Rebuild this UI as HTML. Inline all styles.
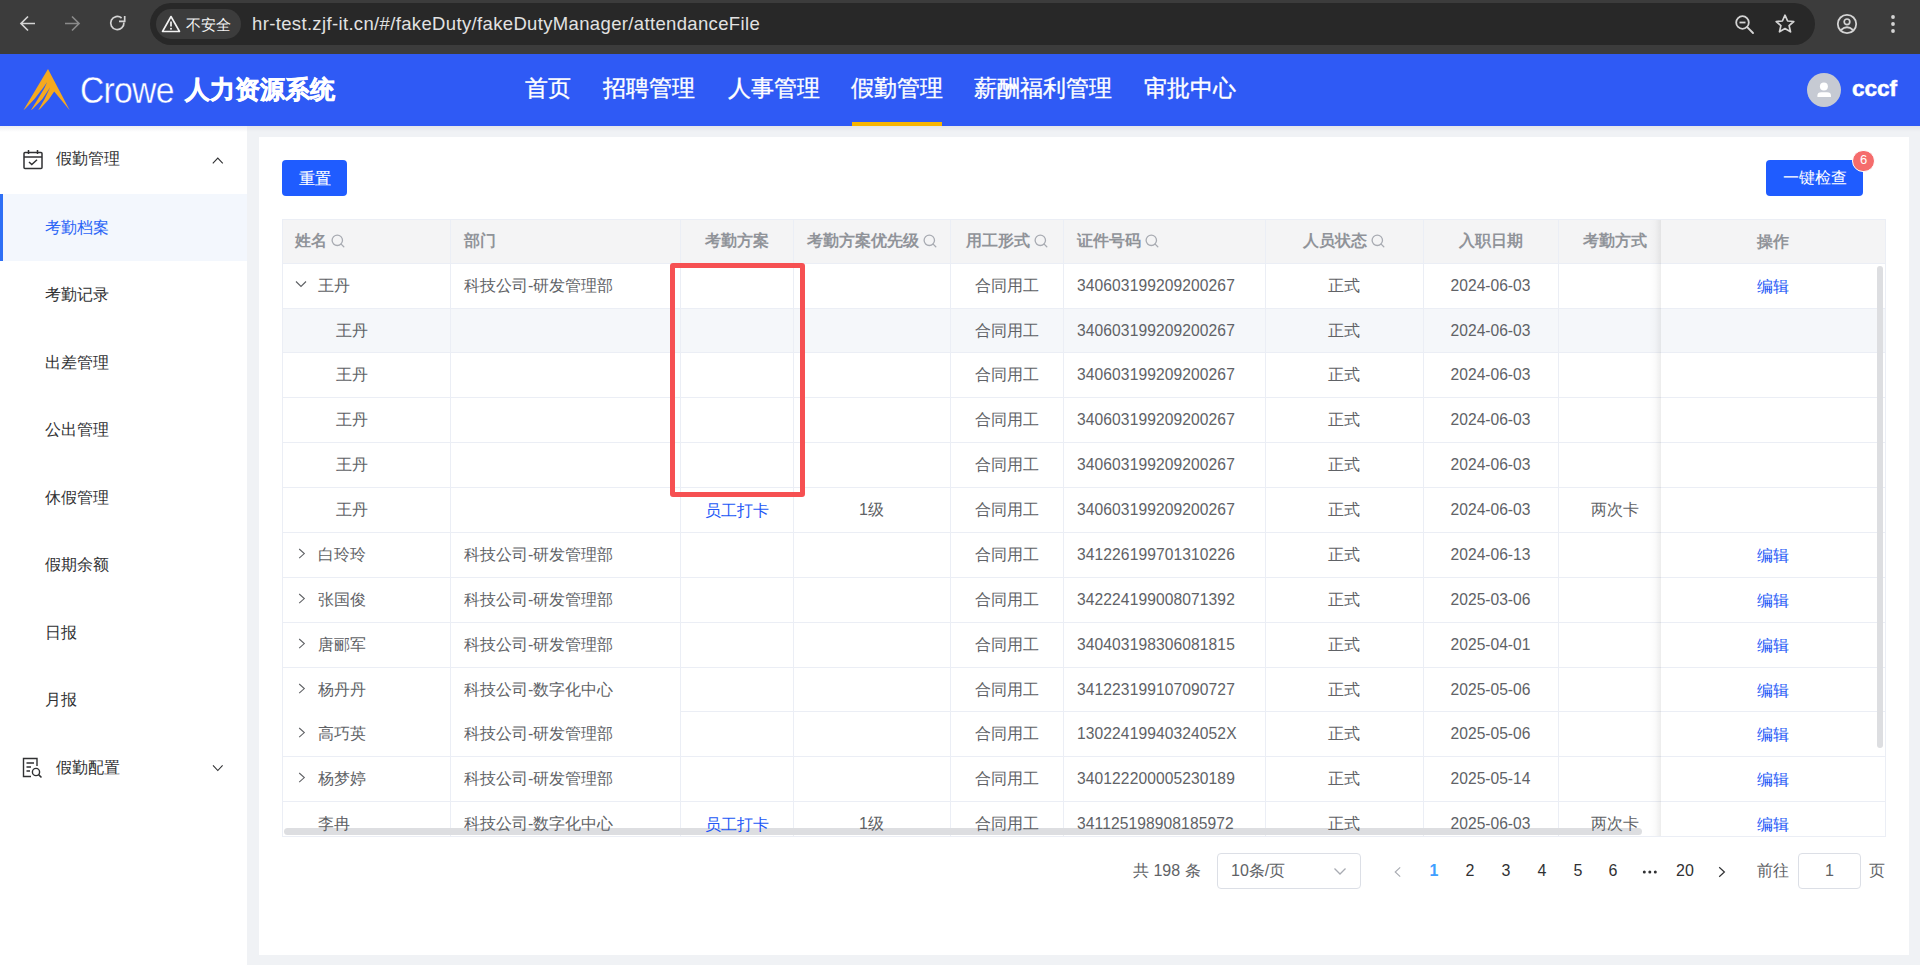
<!DOCTYPE html>
<html><head><meta charset="utf-8"><style>
*{box-sizing:border-box;margin:0;padding:0}
html,body{width:1920px;height:965px;overflow:hidden;background:#f0f2f5;font-family:"Liberation Sans",sans-serif;position:relative}
.abs{position:absolute}
svg{display:block}
.t{position:absolute;white-space:nowrap;z-index:1}
</style></head><body>

<div class="abs" style="left:0;top:0;width:1920px;height:54px;background:#3c3c3c"></div>
<svg class="abs" style="left:18px;top:14px" width="20" height="20" viewBox="0 0 20 20"><path d="M17 9.5 H3.5 M10 2.5 L3 9.5 L10 16.5" fill="none" stroke="#d4d4d4" stroke-width="1.7" stroke-linejoin="miter"/></svg>
<svg class="abs" style="left:63px;top:14px" width="20" height="20" viewBox="0 0 20 20"><path d="M2 9.5 H15.5 M9 2.5 L16 9.5 L9 16.5" fill="none" stroke="#8a8a8a" stroke-width="1.7" stroke-linejoin="miter"/></svg>
<svg class="abs" style="left:107px;top:13px" width="20" height="20" viewBox="0 0 20 20"><path d="M16.9 9.5 A6.6 6.6 0 1 1 14.6 5" fill="none" stroke="#d4d4d4" stroke-width="1.7"/><path d="M12 8.3 H17.7 V3" fill="none" stroke="#d4d4d4" stroke-width="1.7"/></svg>
<div class="abs" style="left:150px;top:3px;width:1665px;height:42px;border-radius:21px;background:#282828"></div>
<div class="abs" style="left:156px;top:9px;width:85px;height:30px;border-radius:15px;background:#3c3c3c"></div>
<svg class="abs" style="left:161px;top:15px" width="20" height="18" viewBox="0 0 20 18"><path d="M10 1.5 L18.5 16.5 H1.5 Z" fill="none" stroke="#f2f2f2" stroke-width="1.6" stroke-linejoin="round"/><path d="M10 6.5 V11.5" stroke="#f2f2f2" stroke-width="1.7"/><circle cx="10" cy="13.8" r="1" fill="#f2f2f2"/></svg>
<div class="t" style="left:186px;top:13.5px;font-size:15px;line-height:22px;color:#f2f2f2">不安全</div>
<div class="t" style="left:252px;top:11.5px;font-size:18.5px;letter-spacing:0.35px;line-height:24px;color:#e2e2e2">hr-test.zjf-it.cn/#/fakeDuty/fakeDutyManager/attendanceFile</div>
<svg class="abs" style="left:1734px;top:14px" width="22" height="22" viewBox="0 0 22 22"><circle cx="8.5" cy="8.5" r="6.3" fill="none" stroke="#d4d4d4" stroke-width="1.8"/><path d="M5.5 8.5 H11.5" stroke="#d4d4d4" stroke-width="1.8"/><path d="M13.2 13.2 L19 19" stroke="#d4d4d4" stroke-width="1.9" stroke-linecap="round"/></svg>
<svg class="abs" style="left:1774px;top:13px" width="22" height="22" viewBox="0 0 22 22"><path d="M11 2.2 L13.6 8 L19.8 8.5 L15.1 12.6 L16.5 18.8 L11 15.5 L5.5 18.8 L6.9 12.6 L2.2 8.5 L8.4 8 Z" fill="none" stroke="#d4d4d4" stroke-width="1.7" stroke-linejoin="round"/></svg>
<svg class="abs" style="left:1836px;top:13px" width="22" height="22" viewBox="0 0 22 22"><circle cx="11" cy="11" r="9.2" fill="none" stroke="#d4d4d4" stroke-width="1.8"/><circle cx="11" cy="8.8" r="2.8" fill="none" stroke="#d4d4d4" stroke-width="1.7"/><path d="M5 17 Q11 11.5 17 17" fill="none" stroke="#d4d4d4" stroke-width="1.7"/></svg>
<svg class="abs" style="left:1888px;top:13px" width="10" height="22" viewBox="0 0 10 22"><circle cx="5" cy="4" r="1.9" fill="#d4d4d4"/><circle cx="5" cy="11" r="1.9" fill="#d4d4d4"/><circle cx="5" cy="18" r="1.9" fill="#d4d4d4"/></svg>
<div class="abs" style="left:0;top:54px;width:1920px;height:72px;background:#2f5af5"></div>
<div class="abs" style="left:0;top:126px;width:1920px;height:6px;background:linear-gradient(#e4e6ea,#f0f2f5)"></div>
<svg class="abs" style="left:20px;top:66px" width="54" height="48" viewBox="0 0 54 48"><path d="M28 3.1 L49.7 44.3 L34.2 25.4 L29.1 33 L20.5 42.5 L18.2 44.3 L24.6 33 L30.2 21.3 L22.4 33 L13 42.8 L10.9 44.2 L17.9 33 L24.6 21.8 L27.2 16.1 L23.2 21.8 L14.5 33 L5.5 42.5 L3.4 44.2 Z" fill="#f5a91f"/></svg>
<div class="t" style="left:79.5px;top:68.5px;font-size:37px;line-height:44px;color:#fff;letter-spacing:-0.8px;-webkit-text-stroke:0.4px #2f5af5;transform-origin:0 0;transform:scaleX(0.91)">Crowe</div>
<div class="t" style="left:185px;top:72px;font-size:25px;line-height:34px;color:#fff;font-weight:bold;-webkit-text-stroke:0.6px #fff">人力资源系统</div>
<div class="t" style="left:525px;top:72px;font-size:23px;line-height:32px;color:#fff;-webkit-text-stroke:0.35px #fff">首页</div>
<div class="t" style="left:603px;top:72px;font-size:23px;line-height:32px;color:#fff;-webkit-text-stroke:0.35px #fff">招聘管理</div>
<div class="t" style="left:728px;top:72px;font-size:23px;line-height:32px;color:#fff;-webkit-text-stroke:0.35px #fff">人事管理</div>
<div class="t" style="left:851px;top:72px;font-size:23px;line-height:32px;color:#fff;-webkit-text-stroke:0.35px #fff">假勤管理</div>
<div class="t" style="left:974px;top:72px;font-size:23px;line-height:32px;color:#fff;-webkit-text-stroke:0.35px #fff">薪酬福利管理</div>
<div class="t" style="left:1144px;top:72px;font-size:23px;line-height:32px;color:#fff;-webkit-text-stroke:0.35px #fff">审批中心</div>
<div class="abs" style="left:852px;top:122px;width:90px;height:4px;background:#f7b500"></div>
<div class="abs" style="left:1807px;top:73px;width:34px;height:34px;border-radius:17px;background:#c6cad3"></div>
<svg class="abs" style="left:1814px;top:80px" width="20" height="20" viewBox="0 0 20 20"><circle cx="9.9" cy="6.4" r="4" fill="#fff"/><path d="M3.4 16.9 V15.6 Q3.4 12.2 7.4 12.2 H13 Q17 12.2 17 15.6 V16.9 Z" fill="#fff"/></svg>
<div class="t" style="left:1852px;top:73px;font-size:22.5px;line-height:32px;color:#fff;font-weight:bold;-webkit-text-stroke:0.5px #fff">cccf</div>
<div class="abs" style="left:0;top:126px;width:247px;height:839px;background:#fff"></div>
<div class="abs" style="left:0;top:126px;width:247px;height:6px;background:linear-gradient(#eceef1,#fff)"></div>
<svg class="abs" style="left:23px;top:149px" width="20" height="21" viewBox="0 0 20 21"><rect x="1" y="3.5" width="18" height="16" rx="1" fill="none" stroke="#303133" stroke-width="1.5"/><path d="M1 8 H19" stroke="#303133" stroke-width="1.5"/><path d="M5.5 1 V5 M14.5 1 V5" stroke="#303133" stroke-width="1.5"/><path d="M6 13 L8.8 15.6 L14 10.8" fill="none" stroke="#303133" stroke-width="1.5"/></svg>
<div class="t" style="left:56px;top:148px;font-size:16px;line-height:22px;color:#303133">假勤管理</div>
<svg class="abs" style="left:211px;top:156px" width="13" height="9" viewBox="0 0 13 9"><path d="M1.8 7.3 L6.8 2 L11.8 7.3" fill="none" stroke="#303133" stroke-width="1.1"/></svg>
<div class="abs" style="left:0;top:194px;width:247px;height:67px;background:#f3f7fd"></div>
<div class="abs" style="left:0;top:194px;width:3px;height:67px;background:#2e6ff5"></div>
<div class="t" style="left:45px;top:216.5px;font-size:16px;line-height:22px;color:#2a64f6">考勤档案</div>
<div class="t" style="left:45px;top:284.0px;font-size:16px;line-height:22px;color:#303133">考勤记录</div>
<div class="t" style="left:45px;top:351.5px;font-size:16px;line-height:22px;color:#303133">出差管理</div>
<div class="t" style="left:45px;top:419.0px;font-size:16px;line-height:22px;color:#303133">公出管理</div>
<div class="t" style="left:45px;top:486.5px;font-size:16px;line-height:22px;color:#303133">休假管理</div>
<div class="t" style="left:45px;top:554.0px;font-size:16px;line-height:22px;color:#303133">假期余额</div>
<div class="t" style="left:45px;top:621.5px;font-size:16px;line-height:22px;color:#303133">日报</div>
<div class="t" style="left:45px;top:689.0px;font-size:16px;line-height:22px;color:#303133">月报</div>
<svg class="abs" style="left:22px;top:757px" width="22" height="22" viewBox="0 0 22 22"><path d="M15 9 V1.5 H1.5 V19.5 H9" fill="none" stroke="#303133" stroke-width="1.4"/><path d="M4.5 6 H12 M4.5 10 H9 M4.5 14 H8" stroke="#303133" stroke-width="1.4"/><circle cx="14" cy="15" r="3.6" fill="none" stroke="#303133" stroke-width="1.4"/><path d="M16.6 17.6 L19.5 20.5" stroke="#303133" stroke-width="1.5"/></svg>
<div class="t" style="left:56px;top:757px;font-size:16px;line-height:22px;color:#303133">假勤配置</div>
<svg class="abs" style="left:211px;top:764px" width="13" height="9" viewBox="0 0 13 9"><path d="M2 1.3 L6.8 6.5 L11.6 1.3" fill="none" stroke="#303133" stroke-width="1.1"/></svg>
<div class="abs" style="left:259px;top:137px;width:1650px;height:818px;background:#fff"></div>
<div class="abs" style="left:282px;top:160px;width:65px;height:36px;border-radius:4px;background:#1f5cff"></div>
<div class="t" style="left:282px;top:161px;width:65px;text-align:center;font-size:15.5px;line-height:36px;color:#fff;-webkit-text-stroke:0.15px #fff">重置</div>
<div class="abs" style="left:1766px;top:160px;width:97px;height:36px;border-radius:4px;background:#1f5cff"></div>
<div class="t" style="left:1766px;top:160px;width:97px;text-align:center;font-size:15.5px;line-height:36px;color:#fff">一键检查</div>
<div class="abs" style="left:1852px;top:150px;width:23px;height:22px;border:1px solid #fff;border-radius:11px;background:#f56c6c;color:#fff;font-size:13px;line-height:17px;text-align:center">6</div>
<div class="abs" style="left:282px;top:219px;width:1604px;height:618.3px;border:1px solid #ebeef5;background:#fff;overflow:hidden">
<div class="abs" style="left:0;top:0;width:1604px;height:43px;background:#f4f4f5"></div>
<div class="abs" style="left:0;top:43px;width:1604px;height:1px;background:#ebeef5"></div>
<div class="abs" style="left:0;top:89px;width:1604px;height:43px;background:#f5f7fa"></div>
<div class="abs" style="left:0;top:88px;width:1604px;height:1px;background:#ebeef5"></div>
<div class="abs" style="left:0;top:132px;width:1604px;height:1px;background:#ebeef5"></div>
<div class="abs" style="left:0;top:177px;width:1604px;height:1px;background:#ebeef5"></div>
<div class="abs" style="left:0;top:222px;width:1604px;height:1px;background:#ebeef5"></div>
<div class="abs" style="left:0;top:267px;width:1604px;height:1px;background:#ebeef5"></div>
<div class="abs" style="left:0;top:312px;width:1604px;height:1px;background:#ebeef5"></div>
<div class="abs" style="left:0;top:357px;width:1604px;height:1px;background:#ebeef5"></div>
<div class="abs" style="left:0;top:402px;width:1604px;height:1px;background:#ebeef5"></div>
<div class="abs" style="left:0;top:447px;width:1604px;height:1px;background:#ebeef5"></div>
<div class="abs" style="left:397px;top:491px;width:1604px;height:1px;background:#ebeef5"></div>
<div class="abs" style="left:0;top:536px;width:1604px;height:1px;background:#ebeef5"></div>
<div class="abs" style="left:0;top:581px;width:1604px;height:1px;background:#ebeef5"></div>
<div class="abs" style="left:0;top:626px;width:1604px;height:1px;background:#ebeef5"></div>
<div class="abs" style="left:167px;top:0;width:1px;height:700px;background:#ebeef5"></div>
<div class="abs" style="left:397px;top:0;width:1px;height:700px;background:#ebeef5"></div>
<div class="abs" style="left:510px;top:0;width:1px;height:700px;background:#ebeef5"></div>
<div class="abs" style="left:667px;top:0;width:1px;height:700px;background:#ebeef5"></div>
<div class="abs" style="left:780px;top:0;width:1px;height:700px;background:#ebeef5"></div>
<div class="abs" style="left:982px;top:0;width:1px;height:700px;background:#ebeef5"></div>
<div class="abs" style="left:1140px;top:0;width:1px;height:700px;background:#ebeef5"></div>
<div class="abs" style="left:1275px;top:0;width:1px;height:700px;background:#ebeef5"></div>
<div class="t hd" style="left:12px;top:-1px;line-height:44px">姓名<svg class="si" width="14" height="14" viewBox="0 0 14 14"><circle cx="6.3" cy="6.3" r="5.2" fill="none" stroke="#a8abb2" stroke-width="1.3"/><path d="M10.1 10.1 L12.8 12.8" stroke="#a8abb2" stroke-width="1.3" stroke-linecap="round"/></svg></div>
<div class="t hd" style="left:181px;top:-1px;line-height:44px">部门</div>
<div class="t hd" style="left:397px;width:113px;text-align:center;top:-1px;line-height:44px">考勤方案</div>
<div class="t hd" style="left:510px;width:157px;text-align:center;top:-1px;line-height:44px">考勤方案优先级<svg class="si" width="14" height="14" viewBox="0 0 14 14"><circle cx="6.3" cy="6.3" r="5.2" fill="none" stroke="#a8abb2" stroke-width="1.3"/><path d="M10.1 10.1 L12.8 12.8" stroke="#a8abb2" stroke-width="1.3" stroke-linecap="round"/></svg></div>
<div class="t hd" style="left:667px;width:113px;text-align:center;top:-1px;line-height:44px">用工形式<svg class="si" width="14" height="14" viewBox="0 0 14 14"><circle cx="6.3" cy="6.3" r="5.2" fill="none" stroke="#a8abb2" stroke-width="1.3"/><path d="M10.1 10.1 L12.8 12.8" stroke="#a8abb2" stroke-width="1.3" stroke-linecap="round"/></svg></div>
<div class="t hd" style="left:794px;top:-1px;line-height:44px">证件号码<svg class="si" width="14" height="14" viewBox="0 0 14 14"><circle cx="6.3" cy="6.3" r="5.2" fill="none" stroke="#a8abb2" stroke-width="1.3"/><path d="M10.1 10.1 L12.8 12.8" stroke="#a8abb2" stroke-width="1.3" stroke-linecap="round"/></svg></div>
<div class="t hd" style="left:982px;width:158px;text-align:center;top:-1px;line-height:44px">人员状态<svg class="si" width="14" height="14" viewBox="0 0 14 14"><circle cx="6.3" cy="6.3" r="5.2" fill="none" stroke="#a8abb2" stroke-width="1.3"/><path d="M10.1 10.1 L12.8 12.8" stroke="#a8abb2" stroke-width="1.3" stroke-linecap="round"/></svg></div>
<div class="t hd" style="left:1140px;width:135px;text-align:center;top:-1px;line-height:44px">入职日期</div>
<div class="t hd" style="left:1275px;width:113px;text-align:center;top:-1px;line-height:44px">考勤方式</div>
<div class="abs" style="left:12px;top:59.5px"><svg width="12" height="8" viewBox="0 0 12 8"><path d="M1 1.5 L6 6.5 L11 1.5" fill="none" stroke="#606266" stroke-width="1.2"/></svg></div>
<div class="t td" style="left:35px;top:44px;line-height:44px">王丹</div>
<div class="t td" style="left:181px;top:44px;line-height:44px">科技公司-研发管理部</div>
<div class="t td" style="left:667px;width:113px;text-align:center;top:44px;line-height:44px">合同用工</div>
<div class="t td num id" style="left:794px;top:44px;line-height:44px">340603199209200267</div>
<div class="t td" style="left:982px;width:158px;text-align:center;top:44px;line-height:44px">正式</div>
<div class="t td" style="left:1140px;width:135px;text-align:center;top:44px;line-height:44px"><span class="num">2024-06-03</span></div>
<div class="t td" style="left:53px;top:89px;line-height:43px">王丹</div>
<div class="t td" style="left:667px;width:113px;text-align:center;top:89px;line-height:43px">合同用工</div>
<div class="t td num id" style="left:794px;top:89px;line-height:43px">340603199209200267</div>
<div class="t td" style="left:982px;width:158px;text-align:center;top:89px;line-height:43px">正式</div>
<div class="t td" style="left:1140px;width:135px;text-align:center;top:89px;line-height:43px"><span class="num">2024-06-03</span></div>
<div class="t td" style="left:53px;top:133px;line-height:44px">王丹</div>
<div class="t td" style="left:667px;width:113px;text-align:center;top:133px;line-height:44px">合同用工</div>
<div class="t td num id" style="left:794px;top:133px;line-height:44px">340603199209200267</div>
<div class="t td" style="left:982px;width:158px;text-align:center;top:133px;line-height:44px">正式</div>
<div class="t td" style="left:1140px;width:135px;text-align:center;top:133px;line-height:44px"><span class="num">2024-06-03</span></div>
<div class="t td" style="left:53px;top:178px;line-height:44px">王丹</div>
<div class="t td" style="left:667px;width:113px;text-align:center;top:178px;line-height:44px">合同用工</div>
<div class="t td num id" style="left:794px;top:178px;line-height:44px">340603199209200267</div>
<div class="t td" style="left:982px;width:158px;text-align:center;top:178px;line-height:44px">正式</div>
<div class="t td" style="left:1140px;width:135px;text-align:center;top:178px;line-height:44px"><span class="num">2024-06-03</span></div>
<div class="t td" style="left:53px;top:223px;line-height:44px">王丹</div>
<div class="t td" style="left:667px;width:113px;text-align:center;top:223px;line-height:44px">合同用工</div>
<div class="t td num id" style="left:794px;top:223px;line-height:44px">340603199209200267</div>
<div class="t td" style="left:982px;width:158px;text-align:center;top:223px;line-height:44px">正式</div>
<div class="t td" style="left:1140px;width:135px;text-align:center;top:223px;line-height:44px"><span class="num">2024-06-03</span></div>
<div class="t td" style="left:53px;top:268px;line-height:44px">王丹</div>
<div class="t td lk" style="left:397px;width:113px;text-align:center;top:268px;line-height:44px">员工打卡</div>
<div class="t td" style="left:510px;width:157px;text-align:center;top:268px;line-height:44px">1级</div>
<div class="t td" style="left:667px;width:113px;text-align:center;top:268px;line-height:44px">合同用工</div>
<div class="t td num id" style="left:794px;top:268px;line-height:44px">340603199209200267</div>
<div class="t td" style="left:982px;width:158px;text-align:center;top:268px;line-height:44px">正式</div>
<div class="t td" style="left:1140px;width:135px;text-align:center;top:268px;line-height:44px"><span class="num">2024-06-03</span></div>
<div class="t td" style="left:1275px;width:113px;text-align:center;top:268px;line-height:44px">两次卡</div>
<div class="abs" style="left:14px;top:326.5px"><svg width="10" height="13" viewBox="0 0 10 13"><path d="M2.2 2 L7.3 6.6 L2.2 11.2" fill="none" stroke="#606266" stroke-width="1.1"/></svg></div>
<div class="t td" style="left:35px;top:313px;line-height:44px">白玲玲</div>
<div class="t td" style="left:181px;top:313px;line-height:44px">科技公司-研发管理部</div>
<div class="t td" style="left:667px;width:113px;text-align:center;top:313px;line-height:44px">合同用工</div>
<div class="t td num id" style="left:794px;top:313px;line-height:44px">341226199701310226</div>
<div class="t td" style="left:982px;width:158px;text-align:center;top:313px;line-height:44px">正式</div>
<div class="t td" style="left:1140px;width:135px;text-align:center;top:313px;line-height:44px"><span class="num">2024-06-13</span></div>
<div class="abs" style="left:14px;top:371.5px"><svg width="10" height="13" viewBox="0 0 10 13"><path d="M2.2 2 L7.3 6.6 L2.2 11.2" fill="none" stroke="#606266" stroke-width="1.1"/></svg></div>
<div class="t td" style="left:35px;top:358px;line-height:44px">张国俊</div>
<div class="t td" style="left:181px;top:358px;line-height:44px">科技公司-研发管理部</div>
<div class="t td" style="left:667px;width:113px;text-align:center;top:358px;line-height:44px">合同用工</div>
<div class="t td num id" style="left:794px;top:358px;line-height:44px">342224199008071392</div>
<div class="t td" style="left:982px;width:158px;text-align:center;top:358px;line-height:44px">正式</div>
<div class="t td" style="left:1140px;width:135px;text-align:center;top:358px;line-height:44px"><span class="num">2025-03-06</span></div>
<div class="abs" style="left:14px;top:416.5px"><svg width="10" height="13" viewBox="0 0 10 13"><path d="M2.2 2 L7.3 6.6 L2.2 11.2" fill="none" stroke="#606266" stroke-width="1.1"/></svg></div>
<div class="t td" style="left:35px;top:403px;line-height:44px">唐郦军</div>
<div class="t td" style="left:181px;top:403px;line-height:44px">科技公司-研发管理部</div>
<div class="t td" style="left:667px;width:113px;text-align:center;top:403px;line-height:44px">合同用工</div>
<div class="t td num id" style="left:794px;top:403px;line-height:44px">340403198306081815</div>
<div class="t td" style="left:982px;width:158px;text-align:center;top:403px;line-height:44px">正式</div>
<div class="t td" style="left:1140px;width:135px;text-align:center;top:403px;line-height:44px"><span class="num">2025-04-01</span></div>
<div class="abs" style="left:14px;top:461.5px"><svg width="10" height="13" viewBox="0 0 10 13"><path d="M2.2 2 L7.3 6.6 L2.2 11.2" fill="none" stroke="#606266" stroke-width="1.1"/></svg></div>
<div class="t td" style="left:35px;top:448px;line-height:43px">杨丹丹</div>
<div class="t td" style="left:181px;top:448px;line-height:43px">科技公司-数字化中心</div>
<div class="t td" style="left:667px;width:113px;text-align:center;top:448px;line-height:43px">合同用工</div>
<div class="t td num id" style="left:794px;top:448px;line-height:43px">341223199107090727</div>
<div class="t td" style="left:982px;width:158px;text-align:center;top:448px;line-height:43px">正式</div>
<div class="t td" style="left:1140px;width:135px;text-align:center;top:448px;line-height:43px"><span class="num">2025-05-06</span></div>
<div class="abs" style="left:14px;top:505.5px"><svg width="10" height="13" viewBox="0 0 10 13"><path d="M2.2 2 L7.3 6.6 L2.2 11.2" fill="none" stroke="#606266" stroke-width="1.1"/></svg></div>
<div class="t td" style="left:35px;top:492px;line-height:44px">高巧英</div>
<div class="t td" style="left:181px;top:492px;line-height:44px">科技公司-研发管理部</div>
<div class="t td" style="left:667px;width:113px;text-align:center;top:492px;line-height:44px">合同用工</div>
<div class="t td num id" style="left:794px;top:492px;line-height:44px">13022419940324052X</div>
<div class="t td" style="left:982px;width:158px;text-align:center;top:492px;line-height:44px">正式</div>
<div class="t td" style="left:1140px;width:135px;text-align:center;top:492px;line-height:44px"><span class="num">2025-05-06</span></div>
<div class="abs" style="left:14px;top:550.5px"><svg width="10" height="13" viewBox="0 0 10 13"><path d="M2.2 2 L7.3 6.6 L2.2 11.2" fill="none" stroke="#606266" stroke-width="1.1"/></svg></div>
<div class="t td" style="left:35px;top:537px;line-height:44px">杨梦婷</div>
<div class="t td" style="left:181px;top:537px;line-height:44px">科技公司-研发管理部</div>
<div class="t td" style="left:667px;width:113px;text-align:center;top:537px;line-height:44px">合同用工</div>
<div class="t td num id" style="left:794px;top:537px;line-height:44px">340122200005230189</div>
<div class="t td" style="left:982px;width:158px;text-align:center;top:537px;line-height:44px">正式</div>
<div class="t td" style="left:1140px;width:135px;text-align:center;top:537px;line-height:44px"><span class="num">2025-05-14</span></div>
<div class="t td" style="left:35px;top:582px;line-height:44px">李冉</div>
<div class="t td" style="left:181px;top:582px;line-height:44px">科技公司-数字化中心</div>
<div class="t td lk" style="left:397px;width:113px;text-align:center;top:582px;line-height:44px">员工打卡</div>
<div class="t td" style="left:510px;width:157px;text-align:center;top:582px;line-height:44px">1级</div>
<div class="t td" style="left:667px;width:113px;text-align:center;top:582px;line-height:44px">合同用工</div>
<div class="t td num id" style="left:794px;top:582px;line-height:44px">341125198908185972</div>
<div class="t td" style="left:982px;width:158px;text-align:center;top:582px;line-height:44px">正式</div>
<div class="t td" style="left:1140px;width:135px;text-align:center;top:582px;line-height:44px"><span class="num">2025-06-03</span></div>
<div class="t td" style="left:1275px;width:113px;text-align:center;top:582px;line-height:44px">两次卡</div>
<div class="abs" style="left:1px;top:608px;width:1358px;height:7px;border-radius:4px;background:#dddee1;z-index:0"></div>
<div class="abs" style="z-index:3;left:1366px;top:0;width:12px;height:620px;background:linear-gradient(to right,rgba(0,0,0,0),rgba(0,0,0,0.015) 50%,rgba(0,0,0,0.07))"></div>
<div class="abs" style="z-index:3;left:1378px;top:0;width:225px;height:620px;background:#fff">
<div class="abs" style="left:0;top:0;width:300px;height:43px;background:#f4f4f5"></div>
<div class="abs" style="left:0;top:43px;width:300px;height:1px;background:#ebeef5"></div>
<div class="t hd" style="left:0;width:224px;text-align:center;top:0;line-height:44px">操作</div>
<div class="abs" style="left:0;top:88px;width:300px;height:1px;background:#ebeef5"></div>
<div class="t td lk" style="left:0;width:224px;text-align:center;top:44px;line-height:44px">编辑</div>
<div class="abs" style="left:0;top:89px;width:300px;height:43px;background:#f5f7fa"></div>
<div class="abs" style="left:0;top:132px;width:300px;height:1px;background:#ebeef5"></div>
<div class="abs" style="left:0;top:177px;width:300px;height:1px;background:#ebeef5"></div>
<div class="abs" style="left:0;top:222px;width:300px;height:1px;background:#ebeef5"></div>
<div class="abs" style="left:0;top:267px;width:300px;height:1px;background:#ebeef5"></div>
<div class="abs" style="left:0;top:312px;width:300px;height:1px;background:#ebeef5"></div>
<div class="abs" style="left:0;top:357px;width:300px;height:1px;background:#ebeef5"></div>
<div class="t td lk" style="left:0;width:224px;text-align:center;top:313px;line-height:44px">编辑</div>
<div class="abs" style="left:0;top:402px;width:300px;height:1px;background:#ebeef5"></div>
<div class="t td lk" style="left:0;width:224px;text-align:center;top:358px;line-height:44px">编辑</div>
<div class="abs" style="left:0;top:447px;width:300px;height:1px;background:#ebeef5"></div>
<div class="t td lk" style="left:0;width:224px;text-align:center;top:403px;line-height:44px">编辑</div>
<div class="abs" style="left:0;top:491px;width:300px;height:1px;background:#ebeef5"></div>
<div class="t td lk" style="left:0;width:224px;text-align:center;top:448px;line-height:43px">编辑</div>
<div class="abs" style="left:0;top:536px;width:300px;height:1px;background:#ebeef5"></div>
<div class="t td lk" style="left:0;width:224px;text-align:center;top:492px;line-height:44px">编辑</div>
<div class="abs" style="left:0;top:581px;width:300px;height:1px;background:#ebeef5"></div>
<div class="t td lk" style="left:0;width:224px;text-align:center;top:537px;line-height:44px">编辑</div>
<div class="abs" style="left:0;top:626px;width:300px;height:1px;background:#ebeef5"></div>
<div class="t td lk" style="left:0;width:224px;text-align:center;top:582px;line-height:44px">编辑</div>
<div class="abs" style="left:216px;top:46px;width:6px;height:482px;border-radius:3px;background:#dddee1"></div>
</div>
</div>
<div class="t" style="left:1133px;top:860px;font-size:16px;line-height:22px;color:#606266">共 198 条</div>
<div class="abs" style="left:1217px;top:853px;width:144px;height:36px;border:1px solid #dcdfe6;border-radius:4px;background:#fff"></div>
<div class="t" style="left:1231px;top:860px;font-size:16px;line-height:22px;color:#606266">10条/页</div>
<svg class="abs" style="left:1333px;top:867px" width="14" height="9" viewBox="0 0 14 9"><path d="M1.5 1.5 L7 7 L12.5 1.5" fill="none" stroke="#a8abb2" stroke-width="1.3"/></svg>
<svg class="abs" style="left:1392px;top:865px" width="10" height="14" viewBox="0 0 10 14"><path d="M8.2 2.3 L3.2 7 L8.2 11.7" fill="none" stroke="#a8abb2" stroke-width="1.1"/></svg>
<div class="t" style="left:1414px;width:40px;text-align:center;top:860px;font-size:16px;line-height:22px;color:#409eff;font-weight:600">1</div>
<div class="t" style="left:1450px;width:40px;text-align:center;top:860px;font-size:16px;line-height:22px;color:#303133;font-weight:400">2</div>
<div class="t" style="left:1486px;width:40px;text-align:center;top:860px;font-size:16px;line-height:22px;color:#303133;font-weight:400">3</div>
<div class="t" style="left:1522px;width:40px;text-align:center;top:860px;font-size:16px;line-height:22px;color:#303133;font-weight:400">4</div>
<div class="t" style="left:1558px;width:40px;text-align:center;top:860px;font-size:16px;line-height:22px;color:#303133;font-weight:400">5</div>
<div class="t" style="left:1593px;width:40px;text-align:center;top:860px;font-size:16px;line-height:22px;color:#303133;font-weight:400">6</div>
<div class="t" style="left:1665px;width:40px;text-align:center;top:860px;font-size:16px;line-height:22px;color:#303133;font-weight:400">20</div>
<svg class="abs" style="left:1642px;top:869px" width="16" height="6" viewBox="0 0 16 6"><circle cx="2.3" cy="3" r="1.5" fill="#303133"/><circle cx="7.8" cy="3" r="1.5" fill="#303133"/><circle cx="13.3" cy="3" r="1.5" fill="#303133"/></svg>
<svg class="abs" style="left:1717px;top:865px" width="10" height="14" viewBox="0 0 10 14"><path d="M2.2 2.3 L7.4 7 L2.2 11.7" fill="none" stroke="#303133" stroke-width="1.2"/></svg>
<div class="t" style="left:1757px;top:860px;font-size:16px;line-height:22px;color:#606266">前往</div>
<div class="abs" style="left:1798px;top:853px;width:63px;height:36px;border:1px solid #dcdfe6;border-radius:4px;background:#fff"></div>
<div class="t" style="left:1798px;width:63px;text-align:center;top:860px;font-size:16px;line-height:22px;color:#606266">1</div>
<div class="t" style="left:1869px;top:860px;font-size:16px;line-height:22px;color:#606266">页</div>
<div class="abs" style="left:670px;top:263px;width:135px;height:234px;border:5px solid #f65052;border-radius:3px;z-index:5"></div>
<style>
.hd{font-size:15.5px;color:#909399;font-weight:bold}
.hd .si{display:inline-block;vertical-align:-2px;margin-left:4px}
.td{font-size:16px;color:#606266}
.num{font-size:15.6px}
.id{letter-spacing:0.1px}
.lk{color:#2257f6;transform:translateY(1px)}
</style>
</body></html>
